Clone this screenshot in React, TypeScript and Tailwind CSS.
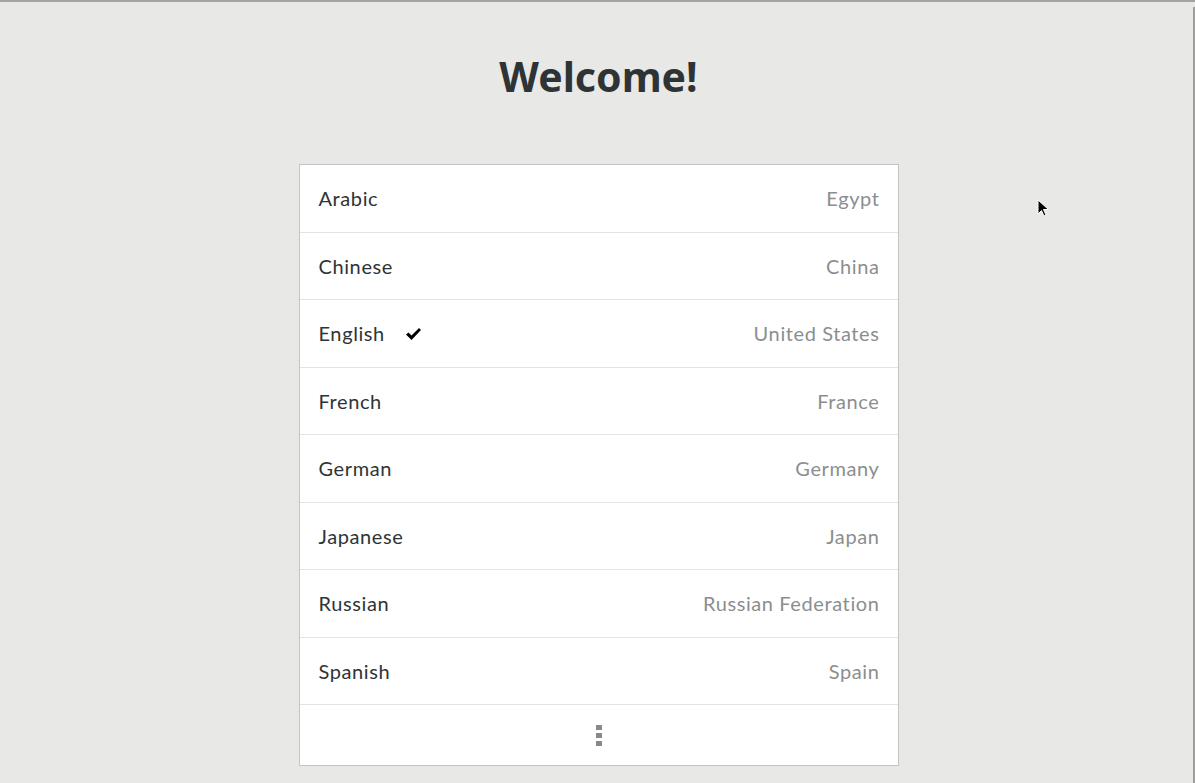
import React from "react";

const rows: [string, string, boolean][] = [
  ["Arabic", "Egypt", false],
  ["Chinese", "China", false],
  ["English", "United States", true],
  ["French", "France", false],
  ["German", "Germany", false],
  ["Japanese", "Japan", false],
  ["Russian", "Russian Federation", false],
  ["Spanish", "Spain", false],
];

export default function App() {
  return (
    <div
      className="relative w-[1195px] h-[783px] overflow-hidden bg-[#e8e8e7] border-t-2 border-[#a3a3a3]"
      style={{ fontFamily: '"Noto Sans", "Open Sans", sans-serif' }}
    >
      <div className="absolute right-0 top-[5px] bottom-0 w-[2px] bg-[#9e9e9e]" />
      <div className="flex flex-col items-center">
        <h1 className="mt-[46px] ml-[2px] h-[56px] text-[41px] leading-[56px] font-bold text-[#2e3436]">
          Welcome!
        </h1>
        <div className="mt-[60px] ml-[2px] w-[600px] bg-white border border-[#c4c4c2] flex flex-col">
          {rows.map(([lang, country, checked]) => (
            <div
              key={lang}
              className="h-[67.5px] border-b border-[#e4e4e3] flex items-center justify-between pl-[19px] pr-[18px] text-[20px] tracking-[0.6px]"
              style={{ fontFamily: 'Lato, sans-serif' }}
            >
              <div className="flex items-center text-[#2e3436]">
                <span>{lang}</span>
                {checked && (
                  <svg width="17" height="14" viewBox="0 0 17 14" className="ml-[20px] mt-[2px]">
                    <path d="M1 7.5 L3.5 5.5 L6.5 8.5 L14 1 L16 3 L6.5 13 Z" fill="#000" />
                  </svg>
                )}
              </div>
              <span className="text-[#8b8e8f]">{country}</span>
            </div>
          ))}
          <div className="h-[60px] flex flex-col items-center justify-center gap-[3px]">
            <div className="w-[6px] h-[5px] bg-[#888a85]" />
            <div className="w-[6px] h-[5px] bg-[#888a85]" />
            <div className="w-[6px] h-[5px] bg-[#888a85]" />
          </div>
        </div>
      </div>
      <svg
        className="absolute left-[1037px] top-[197px]"
        width="14"
        height="20"
        viewBox="0 0 14 20"
      >
        <path d="M1 1 L1 15 L4.5 11.5 L7 17 L9 16 L6.5 10.5 L11.5 10.5 Z" fill="#000" stroke="#fff" strokeWidth="1" />
      </svg>
    </div>
  );
}
